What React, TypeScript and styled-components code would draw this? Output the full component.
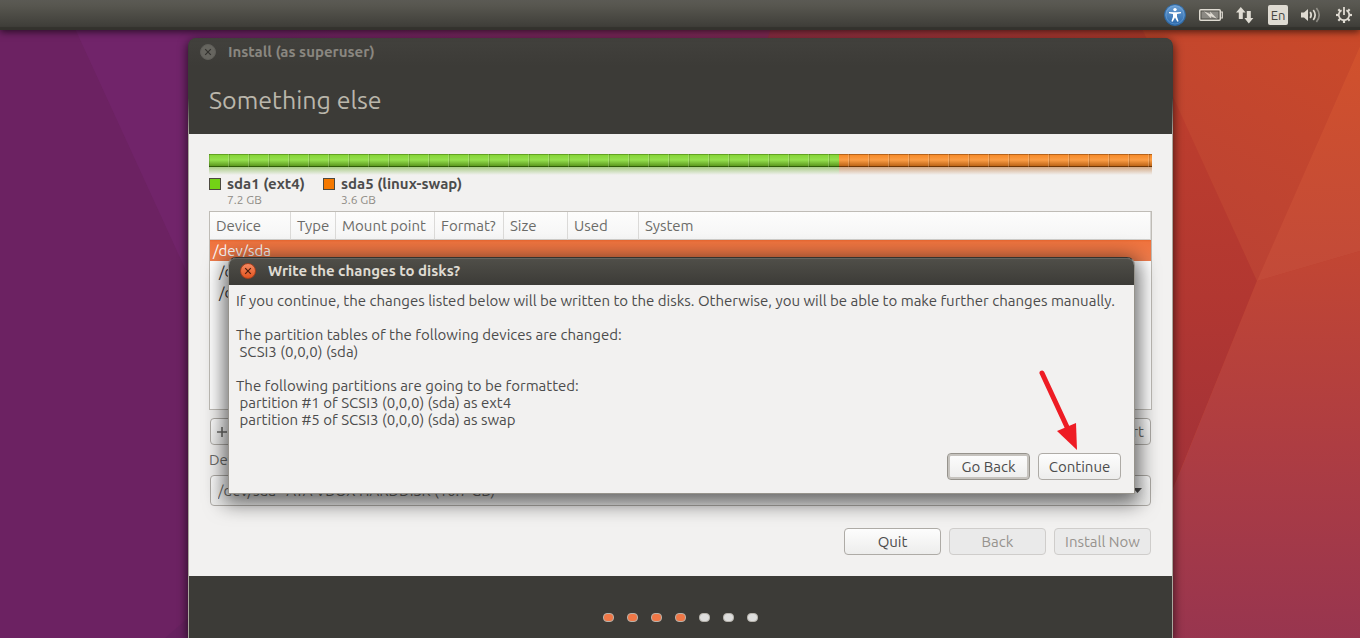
import React from "react";
import styled, { createGlobalStyle, css } from "styled-components";

const colors = {
  panel: "#3c3b37",
  surface: "#f2f1f0",
  text: "#4c4c4c",
  muted: "#6b6b68",
  light: "#dfdbd2",
  orange: "#f07746",
};

const GlobalStyle = createGlobalStyle`
  *, *::before, *::after { box-sizing: border-box; }
  body {
    margin: 0;
    overflow: hidden;
    background: #6c2262;
    color: ${colors.text};
    font: 15px/17px Ubuntu, "Noto Sans", sans-serif;
  }
  button, select { font: inherit; color: inherit; margin: 0; }
`;

const Desktop = styled.div`
  position: relative;
  display: flex;
  flex-direction: column;
  height: 100vh;
  overflow: hidden;
`;

const Backdrop = styled.svg`
  position: absolute;
  inset: 0;
  width: 100%;
  height: 100%;
  z-index: -1;
`;

const TopPanel = styled.header`
  display: flex;
  flex: none;
  align-items: center;
  justify-content: flex-end;
  gap: 13px;
  height: 30px;
  padding: 0 8px;
  background: linear-gradient(#5b5a54 0, #57564f 20%, #3f3e39 88%, #33322d 92%, #33322d 100%);
  box-shadow: 0 2px 7px rgba(0, 0, 0, 0.6);
  z-index: 1;
`;

const Indicator = styled.button`
  display: flex;
  padding: 0;
  border: 0;
  background: none;
  color: ${colors.light};
`;

const LanguageBadge = styled.span`
  width: 20px;
  height: 20px;
  border-radius: 2px;
  background: ${colors.light};
  color: #45443f;
  font-size: 13px;
  line-height: 21px;
  text-align: center;
`;

const Workspace = styled.main`
  display: flex;
  flex: 1;
  min-height: 0;
  padding: 8px 187px 0 188px;
`;

const InstallerWindow = styled.section`
  position: relative;
  display: flex;
  flex: 1;
  flex-direction: column;
  min-width: 0;
  padding: 0 1px;
  border-radius: 8px 8px 0 0;
  background: linear-gradient(${colors.panel} 60px, #aaa79e 95px);
  box-shadow: 0 3px 10px 1px rgba(0, 0, 0, 0.6);
`;

const TitleBar = styled.div<{ $active?: boolean }>`
  display: flex;
  flex: none;
  align-items: center;
  gap: 12px;
  height: 28px;
  padding: 0 11px;
  border-radius: 7px 7px 0 0;
  background: linear-gradient(#42413d, ${colors.panel});
  color: #8a8780;
  font-weight: 700;

  ${(p) =>
    p.$active &&
    css`
      background: linear-gradient(#504f49, ${colors.panel});
      box-shadow: inset 0 1px #65645f;
      color: ${colors.light};
    `}
`;

const WindowTitle = styled.h2`
  margin: 0;
  font-size: 15px;
  line-height: 18px;
`;

const CloseButton = styled.button<{ $active?: boolean }>`
  display: flex;
  align-items: center;
  justify-content: center;
  width: 16px;
  height: 16px;
  padding: 0;
  border: 1px solid ${(p) => (p.$active ? "#a5401f" : "#5f5e59")};
  border-radius: 50%;
  background: ${(p) => (p.$active ? "linear-gradient(#f58a62, #e2541f)" : "#66655f")};
  color: ${(p) => (p.$active ? "#4a1c0c" : "#33322e")};
`;

const PageHeader = styled.div`
  flex: none;
  height: 68px;
  padding: 17px 20px;
  background: ${colors.panel};
`;

const PageTitle = styled.h1`
  margin: 0;
  color: #bab6ab;
  font-size: 25px;
  font-weight: 400;
  line-height: 34px;
`;

const PageBody = styled.div`
  flex: none;
  padding: 20px 20px 21px;
  background: ${colors.surface};
`;

const DiskBar = styled.div`
  position: relative;
  display: flex;
  height: 21px;

  &::after {
    content: "";
    position: absolute;
    inset: 0 0 8px;
    background: repeating-linear-gradient(
      90deg,
      rgba(0, 0, 0, 0.15) 0 1px,
      transparent 1px 19px,
      rgba(255, 255, 255, 0.18) 19px 20px
    );
  }
`;

const diskTones = {
  green: ["#62a321", "#86d538", "#95e04e", "#5c991f", "#2f5c09", "118, 178, 62"],
  orange: ["#b8641a", "#f68b2b", "#fb9d45", "#bd6517", "#6e3606", "190, 120, 60"],
};

type Tone = keyof typeof diskTones;

const DiskSegment = styled.div<{ $tone: Tone; $share: number }>`
  flex: ${(p) => p.$share} 0 0;
  ${({ $tone }) => {
    const [top, start, mid, end, base, glow] = diskTones[$tone];
    return css`
      background: linear-gradient(
        ${top} 0 1px,
        ${start} 1px,
        ${mid} 6px,
        ${end} 12px,
        ${base} 12px 13px,
        rgba(${glow}, 0.6) 13px,
        rgba(${glow}, 0) 21px
      );
    `;
  }}
`;

const Legend = styled.ul`
  display: flex;
  gap: 18px;
  margin: 0 0 5px;
  padding: 0;
  list-style: none;
`;

const LegendItem = styled.li`
  display: grid;
  grid-template-columns: 12px auto;
  column-gap: 6px;
  align-items: center;
`;

const Swatch = styled.span<{ $color: string }>`
  width: 12px;
  height: 12px;
  border: 1px solid #4d4a40;
  background: ${(p) => p.$color};
`;

const PartitionName = styled.strong`
  line-height: 18px;
`;

const PartitionSize = styled.span`
  grid-column: 2;
  color: #8f8b85;
  font-size: 12px;
  line-height: 13px;
`;

const TableFrame = styled.div`
  height: 199px;
  overflow: hidden;
  border: 1px solid #bfbcb6;
  background: #fff;
`;

const PartitionTable = styled.table`
  width: 100%;
  border-spacing: 0;
  table-layout: fixed;
`;

const HeaderCell = styled.th<{ $width?: number }>`
  width: ${(p) => (p.$width ? `${p.$width}px` : "auto")};
  height: 28px;
  padding: 0 0 0 6px;
  border-right: 1px solid #dbdad8;
  border-bottom: 1px solid #cfcdca;
  background: linear-gradient(#fdfdfc, #f5f5f5);
  color: ${colors.muted};
  font-weight: 400;
  text-align: left;
  white-space: nowrap;
`;

const DataRow = styled.tr<{ $selected?: boolean }>`
  color: #333;
  ${(p) =>
    p.$selected &&
    css`
      background: linear-gradient(#e8672f, #f0743f 2px, #f07c4c);
      color: #fff;
    `}
`;

const DataCell = styled.td<{ $nested?: boolean }>`
  height: 21px;
  padding: 0 0 0 ${(p) => (p.$nested ? 9 : 3)}px;
`;

const Controls = styled.div`
  display: flex;
  flex-direction: column;
  padding: 8px 1px 0;
`;

const ButtonRow = styled.div<{ $spread?: boolean }>`
  display: flex;
  justify-content: ${(p) => (p.$spread ? "space-between" : "flex-end")};
  gap: 8px;
`;

const SmallButtons = styled.div`
  display: flex;
`;

const Button = styled.button<{ $wide?: boolean; $focused?: boolean }>`
  height: 27px;
  min-width: ${(p) => (p.$wide ? 97 : 83)}px;
  padding: 0 8px;
  border: 1px solid #aeaba6;
  border-radius: 4px;
  background: linear-gradient(#fdfdfd, #ededec);
  ${(p) => p.$focused && "box-shadow: inset 0 0 0 2px #c6c3be; border-color: #96938c;"}

  &:disabled {
    border-color: #cfcdcb;
    background: #eaeaea;
    color: #97938e;
  }
`;

const ToolButton = styled(Button)`
  min-width: 24px;
  padding: 0 6px 1px;
  color: ${colors.muted};
`;

const FieldLabel = styled.label`
  margin: 6px 0 6px -1px;
  color: ${colors.muted};
  line-height: 18px;
`;

const SelectBox = styled.div`
  position: relative;
  display: flex;
  margin-bottom: 22px;
`;

const Select = styled.select`
  flex: 1;
  height: 31px;
  padding: 0 7px;
  appearance: none;
  border: 1px solid #aeaba6;
  border-radius: 4px;
  background: linear-gradient(#fdfdfd, #ededec);
  color: ${colors.muted};
`;

const SelectArrow = styled.svg`
  position: absolute;
  top: 13px;
  right: 9px;
  pointer-events: none;
`;

const PageFooter = styled.footer`
  display: flex;
  flex: 1 0 62px;
  align-items: flex-start;
  justify-content: center;
  gap: 13px;
  padding-top: 37px;
  background: ${colors.panel};
`;

const StepDot = styled.span<{ $done: boolean }>`
  width: 11px;
  height: 9px;
  border: 1px solid #b5b2ab;
  border-radius: 4px;
  background: ${(p) => (p.$done ? colors.orange : "#dededd")};
`;

const Dialog = styled.section`
  position: absolute;
  top: 219px;
  left: 40px;
  right: 38px;
  border: 1px solid #96938c;
  border-top-color: #33322e;
  border-radius: 8px 8px 0 0;
  background: ${colors.surface};
  box-shadow: 0 5px 20px 4px rgba(0, 0, 0, 0.6);
`;

const DialogTitleBar = styled(TitleBar)`
  height: 27px;
  padding-bottom: 2px;
`;

const DialogBody = styled.div`
  display: flex;
  flex-direction: column;
  gap: 17px;
  padding: 7px 7px 25px;
`;

const Message = styled.p`
  margin: 0;
  white-space: pre-wrap;
`;

const DialogActions = styled(ButtonRow)`
  padding: 0 13px 13px;
`;

const PointerArrow = styled.svg`
  position: absolute;
  right: 54px;
  bottom: 41px;
  pointer-events: none;
`;

function Wallpaper() {
  return (
    <Backdrop viewBox="0 0 1360 638" preserveAspectRatio="none" aria-hidden="true">
      <defs>
        <linearGradient id="base">
          <stop offset="0.14" stopColor="#6c2262" />
          <stop offset="0.5" stopColor="#8a2c4c" />
          <stop offset="0.85" stopColor="#bd3f2d" />
        </linearGradient>
        <linearGradient id="top" x1="1" y1="0" x2="0.6" y2="1">
          <stop offset="0" stopColor="#cb4a28" />
          <stop offset="1" stopColor="#bb4234" />
        </linearGradient>
        <linearGradient id="east" x1="0" y1="0" x2="0" y2="1">
          <stop offset="0" stopColor="#d1512c" />
          <stop offset="1" stopColor="#c24a39" />
        </linearGradient>
        <linearGradient id="west" x1="0" y1="0" x2="0" y2="1">
          <stop offset="0" stopColor="#c0402c" />
          <stop offset="0.5" stopColor="#b23731" />
          <stop offset="1" stopColor="#9d303c" />
        </linearGradient>
        <linearGradient id="south" x1="0" y1="0" x2="0" y2="1">
          <stop offset="0" stopColor="#c24633" />
          <stop offset="0.5" stopColor="#ae3d42" />
          <stop offset="1" stopColor="#98354f" />
        </linearGradient>
      </defs>
      <rect width="1360" height="638" fill="url(#base)" />
      <path d="M62 0H780L700 250L200 301Z" fill="#7a2878" opacity="0.4" />
      <path d="M165 638L240 573V638Z" fill="#60205c" opacity="0.5" />
      <path d="M1129 0H1360V46L1257 281Z" fill="url(#top)" />
      <path d="M1360 46V251L1257 281Z" fill="url(#east)" />
      <path d="M1150 47L1257 281L1150 546Z" fill="url(#west)" />
      <path d="M1257 281L1360 251V638H1113Z" fill="url(#south)" />
    </Backdrop>
  );
}

function Cross() {
  return (
    <svg width="8" height="8" viewBox="0 0 8 8" aria-hidden="true">
      <path d="M1.2 1.2L6.8 6.8M6.8 1.2L1.2 6.8" stroke="currentColor" strokeWidth="1.2" />
    </svg>
  );
}

function AccessibilityIcon() {
  return (
    <svg width="22" height="22" viewBox="0 0 22 22">
      <defs>
        <linearGradient id="blue" x1="0" y1="0" x2="0" y2="1">
          <stop offset="0" stopColor="#6b9fd4" />
          <stop offset="1" stopColor="#2a68aa" />
        </linearGradient>
      </defs>
      <circle cx="11" cy="11" r="10.5" fill="url(#blue)" stroke="#2f679f" />
      <circle cx="11" cy="11" r="9" fill="none" stroke="#8ab8e4" strokeOpacity="0.35" />
      <circle cx="11" cy="5.6" r="1.7" fill="#fff" />
      <path
        d="M5 7.9L9.5 8.2H12.5L17 7.9V9.2L13 9.9V12.8L14.6 17.2L13.4 17.8L11 13.6L8.6 17.8L7.4 17.2L9 12.8V9.9L5 9.2Z"
        fill="#fff"
      />
    </svg>
  );
}

function BatteryIcon() {
  return (
    <svg width="24" height="12" viewBox="0 0 24 12">
      <rect x="0.75" y="0.75" width="20.5" height="10.5" rx="1" fill="none" stroke="currentColor" strokeWidth="1.5" />
      <path d="M22 3H23.3V9H22" fill="none" stroke="currentColor" strokeWidth="1.2" />
      <rect x="2.5" y="2.5" width="17" height="7" fill="#8b8983" />
      <path d="M5 2.2L11.5 5.2L11 2.6L18 9.8L11.8 7.2L12.2 9.6Z" fill="currentColor" />
    </svg>
  );
}

function NetworkIcon() {
  return (
    <svg width="19" height="18" viewBox="0 0 19 18" fill="currentColor">
      <path d="M4.8 1L9.6 6.5H6.8V13H2.8V6.5H0Z" />
      <path d="M12.8 17.4L8.4 12H10.8V5H14.8V12H17.4Z" />
    </svg>
  );
}

function VolumeIcon() {
  return (
    <svg width="22" height="18" viewBox="0 0 22 18" fill="none" stroke="currentColor" strokeWidth="1.7">
      <path d="M0 6.5H3L7 3V15L3 11.5H0Z" fill="currentColor" stroke="none" />
      <path d="M9.2 6Q11.2 9 9.2 12" />
      <path d="M12.3 4Q16 9 12.3 14" />
      <path d="M15.4 2Q21 9 15.4 16" opacity="0.45" />
    </svg>
  );
}

function SessionIcon() {
  const teeth = [45, 90, 135, 180, 225, 270, 315];
  return (
    <svg width="16" height="16" viewBox="0 0 16 16" fill="none" stroke="currentColor" strokeWidth="1.8">
      <path d="M5.6 3.2A5.3 5.3 0 1 0 10.4 3.2" />
      <path d="M8 0V8" />
      {teeth.map((angle) => (
        <path key={angle} d="M8 0V2.6" strokeWidth="2.2" transform={`rotate(${angle} 8 8)`} />
      ))}
    </svg>
  );
}

function PlusIcon() {
  return (
    <svg width="10" height="10" viewBox="0 0 10 10" aria-hidden="true">
      <path d="M5 0V10M0 5H10" stroke="currentColor" strokeWidth="1.6" />
    </svg>
  );
}

const columns = [
  { name: "Device", width: 81 },
  { name: "Type", width: 45 },
  { name: "Mount point", width: 99 },
  { name: "Format?", width: 69 },
  { name: "Size", width: 64 },
  { name: "Used", width: 71 },
  { name: "System" },
];

const devices = ["/dev/sda", "/dev/sda1", "/dev/sda5"];

const steps = [true, true, true, true, false, false, false];

function ConfirmDialog() {
  return (
    <Dialog role="dialog" aria-labelledby="confirm-title">
      <DialogTitleBar $active>
        <CloseButton $active aria-label="Close dialog">
          <Cross />
        </CloseButton>
        <WindowTitle id="confirm-title">Write the changes to disks?</WindowTitle>
      </DialogTitleBar>
      <DialogBody>
        <Message>
          If you continue, the changes listed below will be written to the disks. Otherwise, you will be able to make
          further changes manually.
        </Message>
        <Message>{"The partition tables of the following devices are changed:\n SCSI3 (0,0,0) (sda)"}</Message>
        <Message>
          {
            "The following partitions are going to be formatted:\n partition #1 of SCSI3 (0,0,0) (sda) as ext4\n partition #5 of SCSI3 (0,0,0) (sda) as swap"
          }
        </Message>
      </DialogBody>
      <DialogActions>
        <Button $focused>Go Back</Button>
        <Button>Continue</Button>
      </DialogActions>
      <PointerArrow width="42" height="82" viewBox="0 0 42 82" aria-hidden="true">
        <path d="M4 3L29 57" stroke="#ee1c24" strokeWidth="5" strokeLinecap="round" />
        <path d="M19 61L38 53L39 80Z" fill="#ee1c24" />
      </PointerArrow>
    </Dialog>
  );
}

export default function App() {
  return (
    <Desktop>
      <GlobalStyle />
      <Wallpaper />
      <TopPanel>
        <Indicator aria-label="Accessibility">
          <AccessibilityIcon />
        </Indicator>
        <Indicator aria-label="Battery">
          <BatteryIcon />
        </Indicator>
        <Indicator aria-label="Network">
          <NetworkIcon />
        </Indicator>
        <Indicator>
          <LanguageBadge>En</LanguageBadge>
        </Indicator>
        <Indicator aria-label="Volume">
          <VolumeIcon />
        </Indicator>
        <Indicator aria-label="Session">
          <SessionIcon />
        </Indicator>
      </TopPanel>

      <Workspace>
        <InstallerWindow>
          <TitleBar>
            <CloseButton aria-label="Close window">
              <Cross />
            </CloseButton>
            <WindowTitle>Install (as superuser)</WindowTitle>
          </TitleBar>
          <PageHeader>
            <PageTitle>Something else</PageTitle>
          </PageHeader>

          <PageBody>
            <DiskBar>
              <DiskSegment $tone="green" $share={630} />
              <DiskSegment $tone="orange" $share={313} />
            </DiskBar>
            <Legend>
              <LegendItem>
                <Swatch $color="#73d216" />
                <PartitionName>sda1 (ext4)</PartitionName>
                <PartitionSize>7.2 GB</PartitionSize>
              </LegendItem>
              <LegendItem>
                <Swatch $color="#f57900" />
                <PartitionName>sda5 (linux-swap)</PartitionName>
                <PartitionSize>3.6 GB</PartitionSize>
              </LegendItem>
            </Legend>

            <TableFrame>
              <PartitionTable>
                <thead>
                  <tr>
                    {columns.map((column) => (
                      <HeaderCell key={column.name} $width={column.width}>
                        {column.name}
                      </HeaderCell>
                    ))}
                  </tr>
                </thead>
                <tbody>
                  {devices.map((device, index) => (
                    <DataRow key={device} $selected={index === 0}>
                      <DataCell $nested={index > 0} colSpan={columns.length}>
                        {device}
                      </DataCell>
                    </DataRow>
                  ))}
                </tbody>
              </PartitionTable>
            </TableFrame>

            <Controls>
              <ButtonRow $spread>
                <SmallButtons>
                  <ToolButton aria-label="Add partition">
                    <PlusIcon />
                  </ToolButton>
                </SmallButtons>
                <ToolButton>Revert</ToolButton>
              </ButtonRow>
              <FieldLabel htmlFor="boot-device">Device for boot loader installation:</FieldLabel>
              <SelectBox>
                <Select id="boot-device">
                  <option>/dev/sda{"\u00a0\u00a0\u00a0"}ATA VBOX HARDDISK (10.7 GB)</option>
                </Select>
                <SelectArrow width="9" height="5" viewBox="0 0 9 5" aria-hidden="true">
                  <path d="M0 0H9L4.5 5Z" fill={colors.text} />
                </SelectArrow>
              </SelectBox>
              <ButtonRow>
                <Button $wide>Quit</Button>
                <Button $wide disabled>
                  Back
                </Button>
                <Button $wide disabled>
                  Install Now
                </Button>
              </ButtonRow>
            </Controls>
          </PageBody>

          <PageFooter>
            {steps.map((done, index) => (
              <StepDot key={index} $done={done} />
            ))}
          </PageFooter>

          <ConfirmDialog />
        </InstallerWindow>
      </Workspace>
    </Desktop>
  );
}
